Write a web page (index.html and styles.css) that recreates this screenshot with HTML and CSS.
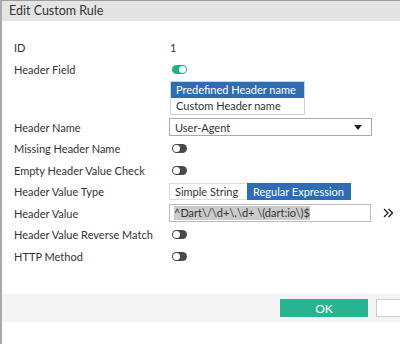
FILE: index.html
```html
<!DOCTYPE html>
<html lang="en">
<head>
    <meta charset="UTF-8">
    <title>Edit Custom Rule</title>
    <link rel="stylesheet" href="styles.css">
</head>
<body>

<div class="dialog">
    <div class="title-bar">Edit Custom Rule</div>

    <div class="form">
        <div class="row">
            <div class="label">ID</div>
            <div class="field">1</div>
        </div>

        <div class="row">
            <div class="label">Header Field</div>
            <div class="field"><span class="toggle on"></span></div>
        </div>

        <div class="row list-row">
            <div class="label"></div>
            <div class="field">
                <div class="listbox">
                    <div class="option selected">Predefined Header name</div>
                    <div class="option">Custom Header name</div>
                </div>
            </div>
        </div>

        <div class="row">
            <div class="label">Header Name</div>
            <div class="field">
                <div class="select">
                    <span>User-Agent</span>
                    <span class="caret"></span>
                </div>
            </div>
        </div>

        <div class="row">
            <div class="label">Missing Header Name</div>
            <div class="field"><span class="toggle"></span></div>
        </div>

        <div class="row">
            <div class="label">Empty Header Value Check</div>
            <div class="field"><span class="toggle"></span></div>
        </div>

        <div class="row">
            <div class="label">Header Value Type</div>
            <div class="field">
                <div class="segmented">
                    <span class="seg">Simple String</span>
                    <span class="seg active">Regular Expression</span>
                </div>
            </div>
        </div>

        <div class="row">
            <div class="label">Header Value</div>
            <div class="field">
                <div class="text-input"><span class="sel-text">^Dart\/\d+\.\d+ \(dart:io\)$</span></div>
                <svg class="expand" width="11" height="10" viewBox="0 0 11 10">
                    <path d="M1 1 L5 5 L1 9 M5.5 1 L9.5 5 L5.5 9" fill="none" stroke="#222" stroke-width="1.4"/>
                </svg>
            </div>
        </div>

        <div class="row">
            <div class="label">Header Value Reverse Match</div>
            <div class="field"><span class="toggle"></span></div>
        </div>

        <div class="row">
            <div class="label">HTTP Method</div>
            <div class="field"><span class="toggle"></span></div>
        </div>
    </div>

    <div class="footer">
        <button class="btn ok">OK</button>
        <button class="btn cancel"></button>
    </div>
</div>

</body>
</html>
```

FILE: styles.css
```css
body {
    margin: 0;
    padding: 0;
    background-color: #fff;
    font-family: Lato, "Liberation Sans", sans-serif;
    color: #333;
    overflow: hidden;
    width: 400px;
    height: 344px;
}

.dialog {
    width: 400px;
    height: 344px;
    border-left: 2px solid #a9a9a9;
    box-sizing: border-box;
    overflow: hidden;
}

.title-bar {
    height: 20px;
    background-color: #e4e4e4;
    border-top: 1px solid #9c9c9c;
    font-size: 12.5px;
    line-height: 20px;
    padding-left: 7px;
    color: #333;
}

.form {
    padding-top: 16px;
    padding-left: 12px;
}

.row {
    display: flex;
    align-items: center;
    height: 21.5px;
    font-size: 11px;
}

.label {
    width: 153px;
    flex-shrink: 0;
}

.field {
    display: flex;
    align-items: center;
    padding-left: 3px;
}

.list-row {
    height: auto;
    margin-top: 1px;
    margin-bottom: 1.5px;
}

.listbox {
    width: 133px;
    border: 1px solid #d2d2d2;
    background-color: #fff;
}

.option {
    height: 16px;
    line-height: 16px;
    padding-left: 5px;
    white-space: nowrap;
}

.option.selected {
    background-color: #2d6db4;
    color: #fff;
}

.select {
    width: 187px;
    height: 16px;
    border: 1px solid #a9a9a9;
    display: flex;
    align-items: center;
    justify-content: space-between;
    padding-left: 5px;
    padding-right: 9px;
    margin-left: -1px;
}

.caret {
    width: 0;
    height: 0;
    border-left: 4px solid transparent;
    border-right: 4px solid transparent;
    border-top: 5px solid #222;
}

.toggle {
    display: inline-block;
    position: relative;
    width: 15px;
    height: 9px;
    border-radius: 5px;
    background-color: #4a4a4a;
    margin-left: 2px;
}

.toggle::after {
    content: "";
    position: absolute;
    top: 1px;
    left: 1px;
    width: 7px;
    height: 7px;
    border-radius: 50%;
    background-color: #fff;
}

.toggle.on {
    background-color: #1fb184;
}

.toggle.on::after {
    left: 7px;
}

.segmented {
    display: flex;
    height: 17px;
    margin-left: -1px;
}

.seg {
    line-height: 15px;
    padding: 0 5px;
    border: 1px solid #ddd;
    border-right: none;
    box-sizing: border-box;
    width: 78px;
    white-space: nowrap;
}

.seg.active {
    background-color: #2d6db4;
    color: #fff;
    border-color: #2d6db4;
    width: 104px;
}

.text-input {
    width: 196px;
    height: 16px;
    border: 1px solid #bbb;
    padding-left: 4px;
    display: flex;
    align-items: center;
    margin-left: -1px;
    white-space: nowrap;
}

.sel-text {
    background-color: #cbcbcb;
    color: #333;
    line-height: 14px;
}

.expand {
    margin-left: 12px;
}

.footer {
    margin-top: 27px;
    height: 28px;
    background-color: #f4f4f4;
    display: flex;
    align-items: center;
    padding-left: 278px;
    gap: 8px;
}

.btn {
    height: 18px;
    font-family: Lato, "Liberation Sans", sans-serif;
    font-size: 12px;
    border: none;
    padding: 0;
    flex-shrink: 0;
}

.ok {
    width: 88px;
    background-color: #26b491;
    color: #fff;
}

.cancel {
    width: 80px;
    background-color: #fff;
    border: 1px solid #ccc;
}
```
